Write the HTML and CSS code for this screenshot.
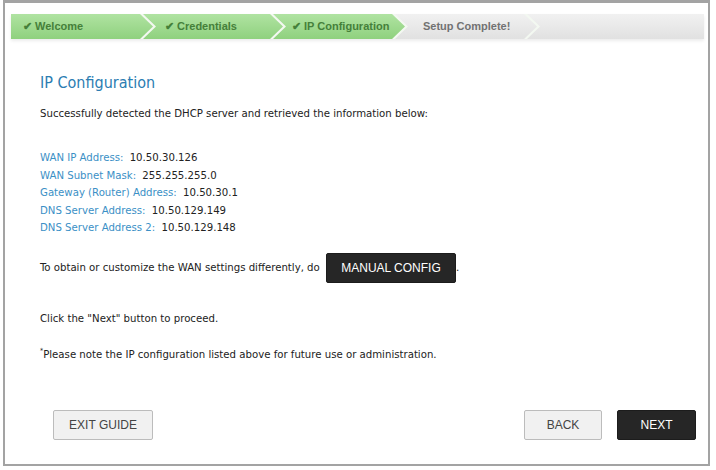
FILE: index.html
```html
<!DOCTYPE html>
<html lang="en">

<head>
    <meta charset="utf-8">
    <meta name="viewport" content="width=device-width, initial-scale=1.0">
    <title>IP Configuration</title>

    <link rel="stylesheet" href="styles.css">
</head>

<body>

    <div class="frame">

        <nav class="steps">
            <div class="step done first">&#10004; Welcome</div>
            <div class="step done second">&#10004; Credentials</div>
            <div class="step done third">&#10004; IP Configuration</div>
            <div class="step todo fourth">Setup Complete!</div>
            <div class="step todo rest"></div>
        </nav>

        <main class="content">
            <h1>IP Configuration</h1>
            <p class="intro">Successfully detected the DHCP server and retrieved the information below:</p>

            <ul class="info">
                <li><span class="label">WAN IP Address:</span> 10.50.30.126</li>
                <li><span class="label">WAN Subnet Mask:</span> 255.255.255.0</li>
                <li><span class="label">Gateway (Router) Address:</span> 10.50.30.1</li>
                <li><span class="label">DNS Server Address:</span> 10.50.129.149</li>
                <li><span class="label">DNS Server Address 2:</span> 10.50.129.148</li>
            </ul>

            <p class="manual">To obtain or customize the WAN settings differently, do <button class="btn dark manual-btn">MANUAL CONFIG</button>.</p>

            <p class="proceed">Click the "Next" button to proceed.</p>
            <p class="note"><sup>*</sup>Please note the IP configuration listed above for future use or administration.</p>
        </main>

        <footer class="actions">
            <button class="btn light exit">EXIT GUIDE</button>
            <div class="right">
                <button class="btn light back">BACK</button>
                <button class="btn dark next">NEXT</button>
            </div>
        </footer>

    </div>

</body>

</html>
```

FILE: styles.css
```css
body {
    margin: 0;
    padding: 0;
    background-color: white;
    font-family: "DejaVu Sans Condensed", "DejaVu Sans", sans-serif;
    font-size: 11.3px;
    color: #222;
}

.frame {
    box-sizing: border-box;
    height: 466px;
    margin: 0 6px 0 3px;
    border: 2px solid #a3a3a3;
    border-top-width: 3px;
    display: flex;
    flex-direction: column;
}

/*Trin øverst*/

.steps {
    display: flex;
    height: 25px;
    margin: 11px 4px 0 6px;
    background-color: #f3f8f1;
    box-shadow: 0 2px 3px rgba(0, 0, 0, 0.08);
}

.step {
    box-sizing: border-box;
    height: 25px;
    line-height: 25px;
    padding-left: 22px;
    margin-left: -10px;
    font-family: "Liberation Sans", Arial, sans-serif;
    font-size: 11px;
    font-weight: bold;
    white-space: nowrap;
    clip-path: polygon(0 0, calc(100% - 13px) 0, 100% 50%, calc(100% - 13px) 100%, 0 100%, 13px 50%);
}

.done {
    background: linear-gradient(#b0e3a2, #8fd17e);
    color: #45803a;
}

.todo {
    background: linear-gradient(#f1f1f1, #e1e1e1);
    color: #727272;
}

.first {
    width: 142px;
    margin-left: 0;
    padding-left: 12px;
    clip-path: polygon(0 0, calc(100% - 13px) 0, 100% 50%, calc(100% - 13px) 100%, 0 100%);
}

.second {
    width: 140px;
}

.third {
    width: 132px;
    padding-left: 19px;
}

.fourth {
    width: 142px;
    padding-left: 28px;
}

.rest {
    flex: 1;
    clip-path: polygon(0 0, 100% 0, 100% 100%, 0 100%, 13px 50%);
}

/*Indhold*/

.content {
    padding-left: 35px;
}

h1 {
    margin: 34px 0 0 0;
    font-size: 16px;
    line-height: 20px;
    font-weight: normal;
    color: #2b7db2;
}

p {
    margin: 0;
    line-height: 17px;
}

.intro {
    margin-top: 12px;
}

.info {
    list-style: none;
    margin: 27px 0 0 0;
    padding: 0;
}

.info li {
    line-height: 17.5px;
}

.label {
    color: #3b90c6;
    margin-right: 3px;
}

.manual {
    margin-top: 16px;
    line-height: 30px;
}

.proceed {
    margin-top: 27px;
}

.note {
    margin-top: 16px;
}

sup {
    font-size: 7px;
    vertical-align: 5px;
}

/*Knapper*/

.btn {
    box-sizing: border-box;
    height: 30px;
    font-family: "Liberation Sans", Arial, sans-serif;
    font-size: 12px;
    border-radius: 2px;
    padding: 0;
    cursor: pointer;
}

.dark {
    background-color: #262626;
    border: 1px solid #1c1c1c;
    color: white;
}

.light {
    background-color: #f1f1f1;
    border: 1px solid #bcbcbc;
    color: #444;
}

.manual-btn {
    width: 130px;
    margin-left: 3px;
    vertical-align: middle;
}

.actions {
    margin-top: auto;
    display: flex;
    justify-content: space-between;
    padding: 0 12px 24px 48px;
}

.right {
    display: flex;
    gap: 15px;
}

.exit {
    width: 100px;
}

.back {
    width: 78px;
}

.next {
    width: 79px;
}
```
